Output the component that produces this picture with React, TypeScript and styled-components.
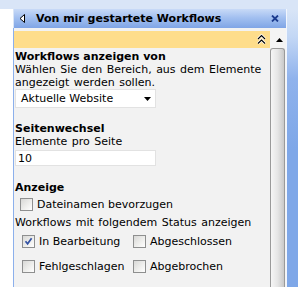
import styled, { createGlobalStyle } from "styled-components";

const GlobalStyle = createGlobalStyle`
  html, body {
    margin: 0;
    padding: 0;
  }
  body {
    background: #d9e5f7;
    font-family: "DejaVu Sans", Verdana, sans-serif;
    font-size: 11px;
    color: #000;
  }
`;

function Checkbox({ checked }: { checked?: boolean }) {
    return (
        <Box>
            {checked && (
                <svg width="9" height="9" viewBox="0 0 9 9">
                    <path d="M1.5 4.2 L3.6 6.8 L7.6 1.2" fill="none" stroke="#3352a3" strokeWidth="1.7" />
                </svg>
            )}
        </Box>
    );
}

function App() {
    return (
        <>
            <GlobalStyle />
            <Page>
                <TopBand />
                <Body>
                    <Gutter />
                    <Panel>
                        <Header>
                            <svg width="7" height="9" viewBox="0 0 7 9">
                                <path d="M5.5 0.5 L1 4.5 L5.5 8.5 Z" fill="#fff" stroke="#000" strokeWidth="1" />
                            </svg>
                            <Title>Von mir gestartete Workflows</Title>
                            <Close>
                                <svg width="8" height="7" viewBox="0 0 8 7">
                                    <path d="M1 0.5 L7 6.5 M7 0.5 L1 6.5" stroke="#1c3b8e" strokeWidth="1.8" />
                                </svg>
                            </Close>
                        </Header>
                        <Frame>
                            <Content>
                                <Fold>
                                    <svg width="9" height="11" viewBox="0 0 9 11">
                                        <path d="M1 5 L4.5 1.5 L8 5 M1 9.5 L4.5 6 L8 9.5" fill="none" stroke="#fff" strokeWidth="2.6" />
                                        <path d="M1 5 L4.5 1.5 L8 5 M1 9.5 L4.5 6 L8 9.5" fill="none" stroke="#000" strokeWidth="1.1" />
                                    </svg>
                                </Fold>

                                <Heading>Workflows anzeigen von</Heading>
                                <Hint>
                                    Wählen Sie den Bereich, aus dem Elemente
                                    <br />
                                    angezeigt werden sollen.
                                </Hint>
                                <Select>
                                    Aktuelle Website
                                    <svg width="7" height="4" viewBox="0 0 7 4">
                                        <path d="M0 0 L7 0 L3.5 4 Z" fill="#000" />
                                    </svg>
                                </Select>

                                <Heading $space={14}>Seitenwechsel</Heading>
                                <Hint>Elemente pro Seite</Hint>
                                <Input>10</Input>

                                <Heading $space={15}>Anzeige</Heading>
                                <Option $indent={5}>
                                    <Checkbox />
                                    Dateinamen bevorzugen
                                </Option>
                                <Hint $space={3}>Workflows mit folgendem Status anzeigen</Hint>
                                <StatusGrid>
                                    <Option>
                                        <Checkbox checked />
                                        In Bearbeitung
                                    </Option>
                                    <Option>
                                        <Checkbox />
                                        Abgeschlossen
                                    </Option>
                                    <Option>
                                        <Checkbox />
                                        Fehlgeschlagen
                                    </Option>
                                    <Option>
                                        <Checkbox />
                                        Abgebrochen
                                    </Option>
                                </StatusGrid>
                            </Content>
                            <Scrollbar>
                                <ArrowUp>
                                    <svg width="7" height="4" viewBox="0 0 7 4">
                                        <path d="M0 4 L7 4 L3.5 0 Z" fill="#000" />
                                    </svg>
                                </ArrowUp>
                                <Thumb />
                            </Scrollbar>
                        </Frame>
                    </Panel>
                    <Stripe />
                </Body>
            </Page>
        </>
    );
}

const Page = styled.div`
    display: flex;
    flex-direction: column;
    width: 298px;
    height: 287px;
    overflow: hidden;
`;

const TopBand = styled.div`
    height: 9px;
    flex: none;
    background: #d9e5f7;
`;

const Body = styled.div`
    display: flex;
    flex: 1;
    min-height: 0;
`;

const Gutter = styled.div`
    width: 13px;
    background: #fff;
`;

const Panel = styled.div`
    width: 273px;
    display: flex;
    flex-direction: column;
`;

const Header = styled.div`
    height: 19px;
    flex: none;
    display: flex;
    align-items: center;
    padding-left: 5px;
    margin-left: 1px;
    margin-right: -2px;
    background: linear-gradient(to bottom, #c8daf7 0%, #a3c0f0 45%, #7fa5e6 100%);
`;

const Title = styled.span`
    font-weight: bold;
    margin-left: 10px;
    flex: 1;
    white-space: nowrap;
`;

const Close = styled.span`
    display: flex;
    margin-right: 9px;
`;

const Frame = styled.div`
    display: flex;
    flex: 1;
    min-height: 0;
    border-left: 1px solid #8cb0ec;
`;

const Content = styled.div`
    flex: 1;
    background: #f2f2f2;
    padding-left: 1px;
`;

const Fold = styled.div`
    height: 17px;
    margin-top: 3px;
    margin-left: -1px;
    background: #fedd8b;
    display: flex;
    align-items: center;
    justify-content: flex-end;
    padding-right: 4px;
`;

const Heading = styled.div<{ $space?: number }>`
    font-weight: bold;
    line-height: 13px;
    margin-top: ${(p) => p.$space ?? 2}px;
    white-space: nowrap;
`;

const Hint = styled.div<{ $space?: number }>`
    line-height: 13px;
    margin-top: ${(p) => p.$space ?? 0}px;
    white-space: nowrap;
    word-spacing: 1px;
`;

const Select = styled.div`
    width: 141px;
    height: 19px;
    box-sizing: border-box;
    background: #fff;
    border: 1px solid #e2e2e2;
    display: flex;
    align-items: center;
    justify-content: space-between;
    padding: 0 4px 0 5px;
`;

const Input = styled.div`
    width: 141px;
    height: 16px;
    box-sizing: border-box;
    margin-top: 2px;
    background: #fff;
    border: 1px solid #e2e2e2;
    display: flex;
    align-items: center;
    padding-left: 2px;
`;

const Option = styled.label<{ $indent?: number }>`
    display: flex;
    align-items: center;
    gap: 4px;
    height: ${(p) => (p.$indent ? 17 : 25)}px;
    margin-top: ${(p) => (p.$indent ? 2 : 0)}px;
    padding-left: ${(p) => p.$indent ?? 0}px;
    white-space: nowrap;
`;

const StatusGrid = styled.div`
    display: grid;
    grid-template-columns: 111px auto;
    padding-left: 7px;
`;

const Box = styled.span`
    width: 13px;
    height: 13px;
    box-sizing: border-box;
    flex: none;
    border: 1px solid #8e8f8f;
    background: linear-gradient(135deg, #d8d8d6 0%, #f0f0ee 60%, #ffffff 100%);
    display: flex;
    align-items: center;
    justify-content: center;
`;

const Scrollbar = styled.div`
    width: 16px;
    display: flex;
    flex-direction: column;
    background: #f4f4f4;
    padding-top: 3px;
`;

const ArrowUp = styled.div`
    height: 17px;
    display: flex;
    align-items: center;
    justify-content: center;
    margin-left: 2px;
`;

const Thumb = styled.div`
    flex: 1;
    border: 1px solid #9a9a9a;
    border-bottom: none;
    border-radius: 3px 3px 0 0;
    margin-right: 1px;
    background: linear-gradient(to right, #f6f6f6 0%, #e6e6e6 50%, #c9c9c9 100%);
`;

const Stripe = styled.div`
    flex: 1;
    border-left: 1px solid #f2f6fd;
    background: linear-gradient(to bottom, #d9e5f7 0px, #c3d7f5 28px, #8fb2ec 70px, #7ea7e8 140px);
`;

export default App;
